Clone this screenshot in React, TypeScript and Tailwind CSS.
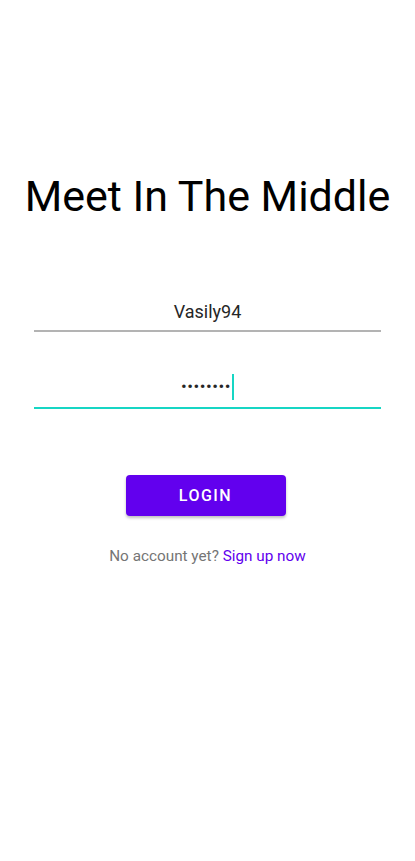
import React from 'react';

const App: React.FC = () => {
  return (
    <div className="w-[415px] h-[861px] bg-white flex flex-col items-center font-['Roboto',sans-serif]">
      <h1 className="mt-[168px] text-[43px] leading-[56px] text-black font-normal">Meet In The Middle</h1>

      <div className="mt-[64px] w-[347px] flex flex-col">
        <div className="h-[44px] flex items-center justify-center border-b-[2px] border-[#b3b3b3] text-[18px] text-[#262626] pt-[4px]">
          Vasily94
        </div>
        <div className="mt-[31px] h-[46px] flex items-center justify-center border-b-[2px] border-[#16d6c4] pt-[4px]">
          <span className="text-[17px] tracking-[0.5px] text-[#262626]">••••••••</span>
          <span className="w-[2px] h-[26px] bg-[#16d6c4] ml-[1px]" />
        </div>
      </div>

      <button className="mt-[66px] mr-[4px] w-[160px] h-[41px] rounded-[4px] bg-[#6200ee] text-white text-[16px] font-medium tracking-[1.5px] shadow-[0_2px_3px_rgba(0,0,0,0.25)]">
        LOGIN
      </button>

      <p className="mt-[29px] text-[15.3px] text-[#757575]">
        No account yet? <span className="text-[#6200ee]">Sign up now</span>
      </p>
    </div>
  );
};

export default App;
